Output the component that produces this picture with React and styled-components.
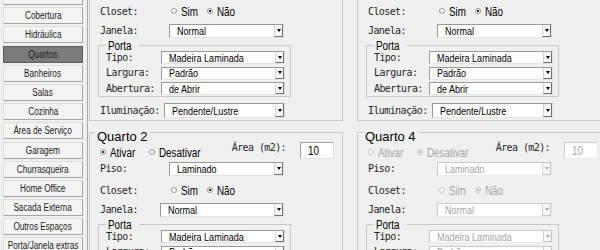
import React from "react";
import styled, { createGlobalStyle } from "styled-components";

const sans = `"Liberation Sans", Arial, sans-serif`;
const mono = `"DejaVu Sans Mono", "Liberation Mono", monospace`;

const GlobalStyle = createGlobalStyle`
  html, body {
    margin: 0;
    padding: 0;
    background: #f0f0f0;
    overflow: hidden;
  }
  body {
    font-family: ${sans};
  }
`;

// the UI font of the screenshot is a narrow face; Arial metrics squeezed to 82%
const Narrow = styled.span`
  display: inline-block;
  white-space: nowrap;
  transform: scaleX(0.82);
  transform-origin: ${(p) => p.$origin || "left"} center;
`;

const Window = styled.div`
  display: flex;
  width: 600px;
  height: 250px;
  overflow: hidden;
  background: #f0f0f0;
`;

const Sidebar = styled.nav`
  flex: 0 0 88px;
  box-sizing: border-box;
  height: 250px;
  overflow: hidden;
  border-right: 1px solid #a9a9a9;
`;

const ButtonList = styled.div`
  display: flex;
  flex-direction: column;
  gap: 2.2px;
  margin-top: -12px;
  padding-left: 3px;
`;

const NavButton = styled.button`
  flex: none;
  width: 80px;
  height: 17px;
  margin: 0;
  padding: 0;
  display: flex;
  align-items: center;
  justify-content: center;
  white-space: nowrap;
  overflow: hidden;
  font: 10px ${sans};
  color: #1b1b1b;
  background: ${(p) => (p.$active ? "#7b7b7b" : "#f4f4f4")};
  border: 1px solid;
  border-color: ${(p) =>
    p.$active ? "#5c5c5c" : "#dedede #a6a6a6 #a6a6a6 #dedede"};
`;

const Main = styled.div`
  flex: none;
  display: flex;
  align-items: flex-start;
  gap: 14px;
  padding-left: 1px;
`;

const Column = styled.div`
  flex: 0 0 254px;
  display: flex;
  flex-direction: column;
  gap: 11px;
  margin-top: -47px;
`;

const Group = styled.section`
  box-sizing: border-box;
  border: 1px solid #c9c9c9;
  padding: 0 8px 2px 10px;
  display: flex;
  flex-direction: column;
`;

const GroupTitle = styled.div`
  align-self: flex-start;
  margin: -3px 0 0 -5px;
  padding: 0 2px;
  background: #f0f0f0;
  font: 13px/14px ${sans};
  color: #000;
`;

const Header = styled.div`
  display: flex;
  align-items: flex-start;
`;

const HeaderLeft = styled.div`
  display: flex;
  flex-direction: column;
`;

const AreaBlock = styled.div`
  margin: 9px ${(p) => p.$shift || 0}px 0 auto;
  display: flex;
  align-items: flex-start;
  gap: 14px;
`;

const Label = styled.span`
  flex: none;
  width: ${(p) => (p.$w ? `${p.$w}px` : "auto")};
  font: 10px/12px ${mono};
  letter-spacing: -0.6px;
  color: #262626;
  white-space: nowrap;
`;

const AreaInput = styled.div`
  box-sizing: border-box;
  width: 34px;
  height: 17px;
  padding-left: 7px;
  display: flex;
  align-items: center;
  background: #fff;
  border: 1px solid;
  border-color: ${(p) =>
    p.$disabled ? "#cfcfcf #ececec #ececec #cfcfcf" : "#a0a0a0 #e3e3e3 #e3e3e3 #a0a0a0"};
  font: 12px ${sans};
  color: ${(p) => (p.$disabled ? "#a8a8a8" : "#000")};
`;

const Row = styled.div`
  display: flex;
  align-items: center;
  height: ${(p) => p.$h || 14}px;
  margin-top: ${(p) => p.$mt || 0}px;
`;

const Radios = styled.div`
  display: flex;
  align-items: center;
`;

const RadioOption = styled.span`
  flex: none;
  width: ${(p) => (p.$w ? `${p.$w}px` : "auto")};
  display: flex;
  align-items: center;
  gap: 4px;
  font: 12px/14px ${sans};
  color: ${(p) => (p.$disabled ? "#a6a6a6" : "#000")};
`;

const RadioCircle = styled.span`
  flex: none;
  box-sizing: border-box;
  width: 6px;
  height: 6px;
  margin-bottom: 2px;
  border-radius: 50%;
  border: 1px solid ${(p) => (p.$disabled ? "#c8c8c8" : "#949494")};
  background: ${(p) =>
    p.$checked
      ? `radial-gradient(circle, ${p.$disabled ? "#ababab" : "#262626"} 0 1px, #fff 1.5px)`
      : "#fff"};
`;

const SelectBox = styled.div`
  flex: none;
  box-sizing: border-box;
  width: ${(p) => p.$w}px;
  height: ${(p) => p.$h || 14}px;
  display: flex;
  align-items: stretch;
  background: #fff;
  border: 1px solid;
  border-color: ${(p) =>
    p.$disabled ? "#c9c9c9 #ececec #ececec #c9c9c9" : "#9a9a9a #e3e3e3 #e3e3e3 #9a9a9a"};
`;

const SelectText = styled.span`
  flex: 1;
  padding-left: 7px;
  display: flex;
  align-items: center;
  overflow: hidden;
  font: 11px ${sans};
  color: ${(p) => (p.$disabled ? "#a6a6a6" : "#000")};
`;

const SelectArrow = styled.span`
  flex: 0 0 9px;
  box-sizing: border-box;
  display: flex;
  align-items: center;
  justify-content: center;
  background: #f7f7f7;
  border-left: 1px solid #d4d4d4;
  border-right: 1px solid ${(p) => (p.$disabled ? "#c4c4c4" : "#707070")};
  border-bottom: 1px solid ${(p) => (p.$disabled ? "#c4c4c4" : "#707070")};

  &::after {
    content: "";
    border-left: 2px solid transparent;
    border-right: 2px solid transparent;
    border-top: 3px solid ${(p) => (p.$disabled ? "#ababab" : "#000")};
  }
`;

const PortaBox = styled.div`
  box-sizing: border-box;
  width: 193px;
  margin: ${(p) => p.$mt}px 0 0 -2px;
  padding: 0 5px 1px 7px;
  border: 1px solid #c9c9c9;
  display: flex;
  flex-direction: column;
  gap: 2.5px;
`;

const PortaTitle = styled.div`
  align-self: flex-start;
  margin-top: -5px;
  margin-bottom: -2.5px;
  padding: 0 2px;
  background: #f0f0f0;
  font: 12px/10px ${sans};
  color: #000;
`;

const Select = ({ value, w, h, disabled }) => (
  <SelectBox $w={w} $h={h} $disabled={disabled}>
    <SelectText $disabled={disabled}>
      <Narrow>{value}</Narrow>
    </SelectText>
    <SelectArrow $disabled={disabled} />
  </SelectBox>
);

const Radio = ({ label, checked, disabled, w }) => (
  <RadioOption $disabled={disabled} $w={w}>
    <RadioCircle $checked={checked} $disabled={disabled} />
    <Narrow>{label}</Narrow>
  </RadioOption>
);

const navItems = [
  "Elétrica",
  "Cobertura",
  "Hidráulica",
  "Quartos",
  "Banheiros",
  "Salas",
  "Cozinha",
  "Área de Serviço",
  "Garagem",
  "Churrasqueira",
  "Home Office",
  "Sacada Externa",
  "Outros Espaços",
  "Porta/Janela extras",
];

const Quarto = ({ name, active = true, disabled = false, janelaW = 69, areaShift = 0 }) => (
  <Group>
    <Header>
      <HeaderLeft>
        <GroupTitle>{name}</GroupTitle>
        <Row $mt={2}>
          <Radios>
            <Radio label="Ativar" w={49} checked={active} disabled={disabled} />
            <Radio label="Desativar" checked={!active} disabled={disabled} />
          </Radios>
        </Row>
      </HeaderLeft>
      <AreaBlock $shift={areaShift}>
        <Label>Área (m2):</Label>
        <AreaInput $disabled={disabled}>
          <Narrow>10</Narrow>
        </AreaInput>
      </AreaBlock>
    </Header>

    <Row $mt={2}>
      <Label $w={69}>Piso:</Label>
      <Select value="Laminado" w={115} disabled={disabled} />
    </Row>

    <Row $mt={8}>
      <Label $w={71}>Closet:</Label>
      <Radios>
        <Radio label="Sim" w={36} disabled={disabled} />
        <Radio label="Não" checked disabled={disabled} />
      </Radios>
    </Row>

    <Row $mt={5}>
      <Label $w={janelaW}>Janela:</Label>
      <Select value="Normal" w={184 - janelaW} disabled={disabled} />
    </Row>

    <PortaBox $mt={7}>
      <PortaTitle>
        <Narrow>Porta</Narrow>
      </PortaTitle>
      <Row $h={13}>
        <Label $w={55}>Tipo:</Label>
        <Select value="Madeira Laminada" w={124} h={13} disabled={disabled} />
      </Row>
      <Row $h={13}>
        <Label $w={55}>Largura:</Label>
        <Select value="Padrão" w={124} h={13} disabled={disabled} />
      </Row>
      <Row $h={13}>
        <Label $w={55}>Abertura:</Label>
        <Select value="de Abrir" w={124} h={13} disabled={disabled} />
      </Row>
    </PortaBox>

    <Row $h={15} $mt={6}>
      <Label $w={64}>Iluminação:</Label>
      <Select value="Pendente/Lustre" w={121} h={15} disabled={disabled} />
    </Row>
  </Group>
);

export default function App() {
  return (
    <>
      <GlobalStyle />
      <Window>
        <Sidebar>
          <ButtonList>
            {navItems.map((item) => (
              <NavButton key={item} $active={item === "Quartos"}>
                <Narrow $origin="center">{item}</Narrow>
              </NavButton>
            ))}
          </ButtonList>
        </Sidebar>
        <Main>
          <Column>
            <Quarto name="Quarto 1" />
            <Quarto name="Quarto 2" janelaW={60} />
          </Column>
          <Column>
            <Quarto name="Quarto 3" />
            <Quarto name="Quarto 4" active={false} disabled areaShift={4} />
          </Column>
        </Main>
      </Window>
    </>
  );
}
